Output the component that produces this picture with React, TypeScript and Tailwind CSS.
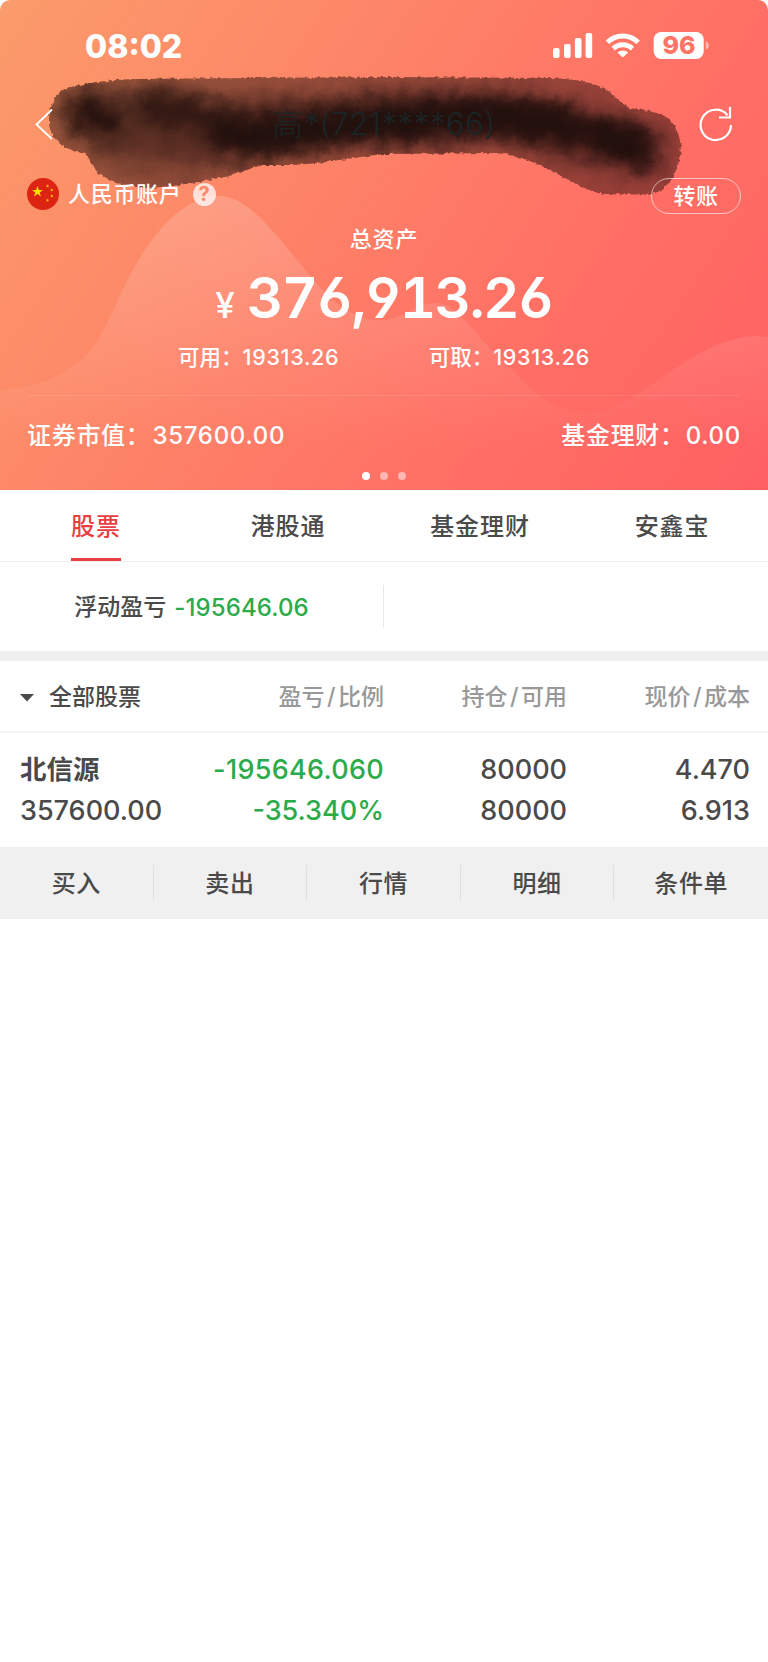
import { clsx } from "clsx";

const tabs = ["股票", "港股通", "基金理财", "安鑫宝"];
const actions = ["买入", "卖出", "行情", "明细", "条件单"];

const star = (cx: number, cy: number, r: number) =>
  Array.from({ length: 10 }, (_, i) => {
    const a = (Math.PI / 5) * i - Math.PI / 2;
    const d = i % 2 ? r * 0.4 : r;
    return `${(cx + d * Math.cos(a)).toFixed(2)},${(cy + d * Math.sin(a)).toFixed(2)}`;
  }).join(" ");

function StatusIcons() {
  return (
    <svg width="160" height="30" viewBox="550 31 160 30" fill="#fff">
      <rect x="553" y="48" width="6.6" height="10" rx="2" />
      <rect x="564" y="44" width="6.6" height="14" rx="2" />
      <rect x="574.9" y="38" width="6.6" height="20" rx="2" />
      <rect x="585.6" y="33" width="6.6" height="25" rx="2" />
      <path d="M622.8 57.6 L617.4 52.6 A7.8 7.8 0 0 1 628.2 52.6 Z" />
      <g fill="none" stroke="#fff" strokeWidth="5">
        <path d="M613.2 48.6 A13.8 13.8 0 0 1 632.4 48.6" />
        <path d="M607.4 42.2 A22 22 0 0 1 638.2 42.2" />
      </g>
      <rect x="653.7" y="32" width="50" height="27" rx="7.5" />
      <path d="M705.8 41.2 A4.6 4.6 0 0 1 705.8 49.8 Z" opacity="0.5" />
      <text
        x="679"
        y="54.2"
        textAnchor="middle"
        fontSize="25"
        fontWeight="800"
        fill="#fe7567"
      >
        96
      </text>
    </svg>
  );
}

function Flag() {
  return (
    <svg width="32" height="32" viewBox="27 178 32 32">
      <circle cx="43" cy="194" r="16" fill="#dd2413" />
      <g fill="#fddd00">
        <polygon points={star(37.5, 191.8, 5.8)} />
        <polygon points={star(47.5, 186, 1.8)} />
        <polygon points={star(51.8, 190, 1.8)} />
        <polygon points={star(51.8, 196, 1.8)} />
        <polygon points={star(47.5, 200.3, 1.8)} />
      </g>
    </svg>
  );
}

function Waves() {
  return (
    <svg
      className="pointer-events-none absolute inset-0"
      width="768"
      height="490"
      viewBox="0 0 768 490"
    >
      <defs>
        <linearGradient id="wave" x1="0" y1="196" x2="0" y2="450" gradientUnits="userSpaceOnUse">
          <stop offset="0" stopColor="#fff" stopOpacity="0.18" />
          <stop offset="0.5" stopColor="#fff" stopOpacity="0.1" />
          <stop offset="1" stopColor="#fff" stopOpacity="0" />
        </linearGradient>
      </defs>
      <path
        fill="url(#wave)"
        d="M0 390 C50 387 83 365 98 340 C118 307 126 270 160 230 C184 203 203 196 218 196 C246 196 268 224 310 276 C345 318 370 322 384 320 C405 318 418 303 436 303 C452 303 465 320 494 353 C520 375 545 413 584 413 C640 413 690 336 758 336 L768 337 V490 H0 Z"
      />
    </svg>
  );
}

// Ink brush stroke that hides the account name
function InkStroke() {
  return (
    <svg
      className="pointer-events-none absolute inset-0"
      width="768"
      height="220"
      viewBox="0 0 768 220"
    >
      <defs>
        <filter id="rough" x="0" y="0" width="768" height="220" filterUnits="userSpaceOnUse" colorInterpolationFilters="sRGB">
          <feTurbulence type="fractalNoise" baseFrequency="0.25" numOctaves="2" seed="4" result="n" />
          <feDisplacementMap in="SourceGraphic" in2="n" scale="4" xChannelSelector="R" yChannelSelector="G" />
        </filter>
        <filter id="soft" x="0" y="0" width="768" height="220" filterUnits="userSpaceOnUse" colorInterpolationFilters="sRGB">
          <feGaussianBlur stdDeviation="9" result="b" />
          <feTurbulence type="fractalNoise" baseFrequency="0.05" numOctaves="4" seed="9" result="n" />
          <feDisplacementMap in="b" in2="n" scale="20" xChannelSelector="R" yChannelSelector="G" />
          <feGaussianBlur stdDeviation="0.8" />
        </filter>
        <clipPath id="ink">
          <path d="M49 122 C49 108 55 92 67 88 C85 83 105 80 135 79 L384 77 L551 78 C575 79 590 82 604 88 C614 94 620 104 630 108 C645 110 660 112 669 119 C680 130 682 145 680 156 C677 172 670 188 655 193 C640 195 615 195 598 193 C580 188 565 177 548 169 C530 160 515 155 495 153 L384 154 C350 158 320 164 290 165 L262 165 C250 168 240 174 225 177 C200 182 175 186 150 188 C125 188 100 178 93 167 C88 160 90 155 82 153 C65 150 50 140 49 122 Z" />
        </clipPath>
      </defs>
      <g filter="url(#rough)">
        <g clipPath="url(#ink)">
          <rect width="768" height="220" fill="#1a0604" opacity="0.45" />
          <g filter="url(#soft)" fill="none" stroke="#1c0d0b" strokeLinecap="round" strokeLinejoin="round">
            <path d="M88 114 L200 128 L384 118 L500 116 L590 136 L640 150" strokeWidth="60" opacity="0.42" />
            <path d="M108 152 L180 162 L235 152" strokeWidth="36" opacity="0.25" />
            <path d="M88 113 L108 119" strokeWidth="34" opacity="0.85" />
            <path d="M152 106 L205 114 L250 140 L384 122 L500 118 L580 130 L632 148" strokeWidth="40" opacity="0.68" />
            <path d="M230 138 L384 121 L500 115 L560 124" strokeWidth="42" opacity="0.7" />
            <path d="M604 134 L638 148" strokeWidth="38" opacity="0.75" />
          </g>
        </g>
      </g>
    </svg>
  );
}

function AssetHeader() {
  return (
    <header className="relative h-[490px] overflow-hidden rounded-t-[10px] bg-[linear-gradient(124deg,#fb9b6b_0%,#fd8768_33%,#ff7165_66%,#ff6062_100%)] text-white">
      <Waves />
      <InkStroke />
      <div className="relative flex h-full flex-col">
        <div className="flex h-[92px] items-center justify-between pr-[58px] pl-[85px]">
          <span className="pt-[2px] text-[32px] font-extrabold">08:02</span>
          <StatusIcons />
        </div>

        <div className="flex h-[64px] items-center justify-between pr-[35px] pl-[35px]">
          <svg width="18" height="32" viewBox="0 0 18 32" fill="none" stroke="#fff" strokeWidth="1.8">
            <path d="M17 1.5 L1.5 16.5 L17 31" />
          </svg>
          <span className="ml-[16px] text-[31px] font-light tracking-[0.6px] text-[#1b2426]">
            高*(721****66)
          </span>
          <svg width="34" height="36" viewBox="0 0 34 36" fill="none" stroke="#fff" strokeWidth="2.2">
            <path d="M28.5 9.2 A15.2 15.2 0 1 0 32 19" />
            <path d="M31 1 V11.5 H20" />
          </svg>
        </div>

        <div className="flex h-[76px] items-center justify-between pr-[27px] pl-[27px]">
          <div className="flex items-center">
            <Flag />
            <span className="ml-[9px] text-[22px] font-medium tracking-[0.7px]">人民币账户</span>
            <span className="ml-[11px] flex h-[23px] w-[23px] items-center justify-center rounded-full bg-white/75 text-[20px] font-bold text-[#fb8a6b]">
              ?
            </span>
          </div>
          <button className="mt-[3px] h-[36px] w-[90px] rounded-full border border-white/60 pt-px text-[22px] font-medium tracking-[0.5px]">
            转账
          </button>
        </div>

        <div className="flex h-[14px] items-center justify-center text-[22px] font-medium tracking-[0.8px]">
          总资产
        </div>

        <div className="flex h-[88px] items-baseline justify-center pt-[17px]">
          <span className="mr-[12px] text-[35px] leading-[70px] font-medium">¥</span>
          <span className="text-[56.5px] leading-[70px] font-semibold tracking-[-1.7px] [font-feature-settings:'cv03','cv04','tnum']">
            376,913.26
          </span>
        </div>

        <div className="flex h-[46px] items-center justify-between px-[178px] text-[21.5px] font-medium">
          <span>
            可用：<span className="tracking-[0.7px]">19313.26</span>
          </span>
          <span>
            可取：<span className="tracking-[0.7px]">19313.26</span>
          </span>
        </div>

        <div className="mx-7 mt-[15px] h-px bg-white/10" />

        <div className="flex h-[76px] items-center justify-between px-[27px] pt-[3px] text-[24px] font-medium tracking-[0.7px]">
          <span>
            证券市值：<span className="ml-[2px]">357600.00</span>
          </span>
          <span>
            基金理财：<span className="ml-px">0.00</span>
          </span>
        </div>

        <div className="flex justify-center gap-[10px]">
          <i className="h-2 w-2 rounded-full bg-white" />
          <i className="h-2 w-2 rounded-full bg-white/50" />
          <i className="h-2 w-2 rounded-full bg-white/50" />
        </div>
      </div>
    </header>
  );
}

function ColumnTitle({ left, right }: { left: string; right: string }) {
  return (
    <span>
      {left}
      <span className="mx-[2.5px]">/</span>
      {right}
    </span>
  );
}

export default function App() {
  return (
    <div className="min-h-[1662px] w-[768px] bg-white font-['Inter','Noto_Sans_CJK_SC',sans-serif] text-[#4a4a4a]">
      <AssetHeader />

      {/* Tabs */}
      <nav className="grid h-[72px] grid-cols-4 border-b border-[#ededed] text-[24px] font-medium tracking-[0.9px]">
        {tabs.map((tab, i) => (
          <div key={tab} className="flex justify-center">
            <span
              className={clsx(
                "flex h-[71px] items-center",
                i === 0
                  ? "border-b-[3px] border-[#e93f43] pt-[5px] text-[#e93f43]"
                  : "pt-[2px]"
              )}
            >
              {tab}
            </span>
          </div>
        ))}
      </nav>

      <section className="flex h-[89px] items-center">
        <div className="flex h-[43px] w-[384px] items-center justify-center border-r border-[#e8e8e8] pt-[2px] text-[23px] font-medium">
          <span>浮动盈亏</span>
          <span className="ml-[8px] text-[24px] tracking-[0.1px] text-[#2bab4a]">-195646.06</span>
        </div>
      </section>

      <div className="h-[10px] bg-[#efefef]" />

      {/* Holdings */}
      <div className="grid h-[72px] grid-cols-[364px_183px_183px] items-center border-b-2 border-[#f3f3f3] pt-[3px] pl-5 text-right text-[23px] font-medium text-[#999]">
        <div className="flex items-center justify-between">
          <span className="flex items-center text-[#4a4a4a]">
            <svg width="14" height="8" viewBox="0 0 14 8" className="mr-[15px]">
              <path d="M0 0 H14 L7 7.5 Z" fill="#4a4a4a" />
            </svg>
            全部股票
          </span>
          <ColumnTitle left="盈亏" right="比例" />
        </div>
        <ColumnTitle left="持仓" right="可用" />
        <ColumnTitle left="现价" right="成本" />
      </div>

      <div className="grid h-[114px] grid-cols-[364px_183px_183px] content-center pl-5 text-right text-[27px] leading-[41px] font-medium">
        <div className="flex justify-between">
          <span className="text-[26.5px] font-bold">北信源</span>
          <span className="tracking-[0.3px] text-[#2bab4a]">-195646.060</span>
        </div>
        <span>80000</span>
        <span>4.470</span>
        <div className="flex justify-between">
          <span>357600.00</span>
          <span className="text-[#2bab4a]">-35.340%</span>
        </div>
        <span>80000</span>
        <span>6.913</span>
      </div>

      <div className="grid h-[72px] grid-cols-5 items-center bg-[#f0f0f0] text-center text-[24px] font-medium tracking-[0.6px]">
        {actions.map((action, i) => (
          <span
            key={action}
            className={clsx("h-9 leading-[38px]", i < actions.length - 1 && "border-r border-[#e0e0e0]")}
          >
            {action}
          </span>
        ))}
      </div>
    </div>
  );
}
